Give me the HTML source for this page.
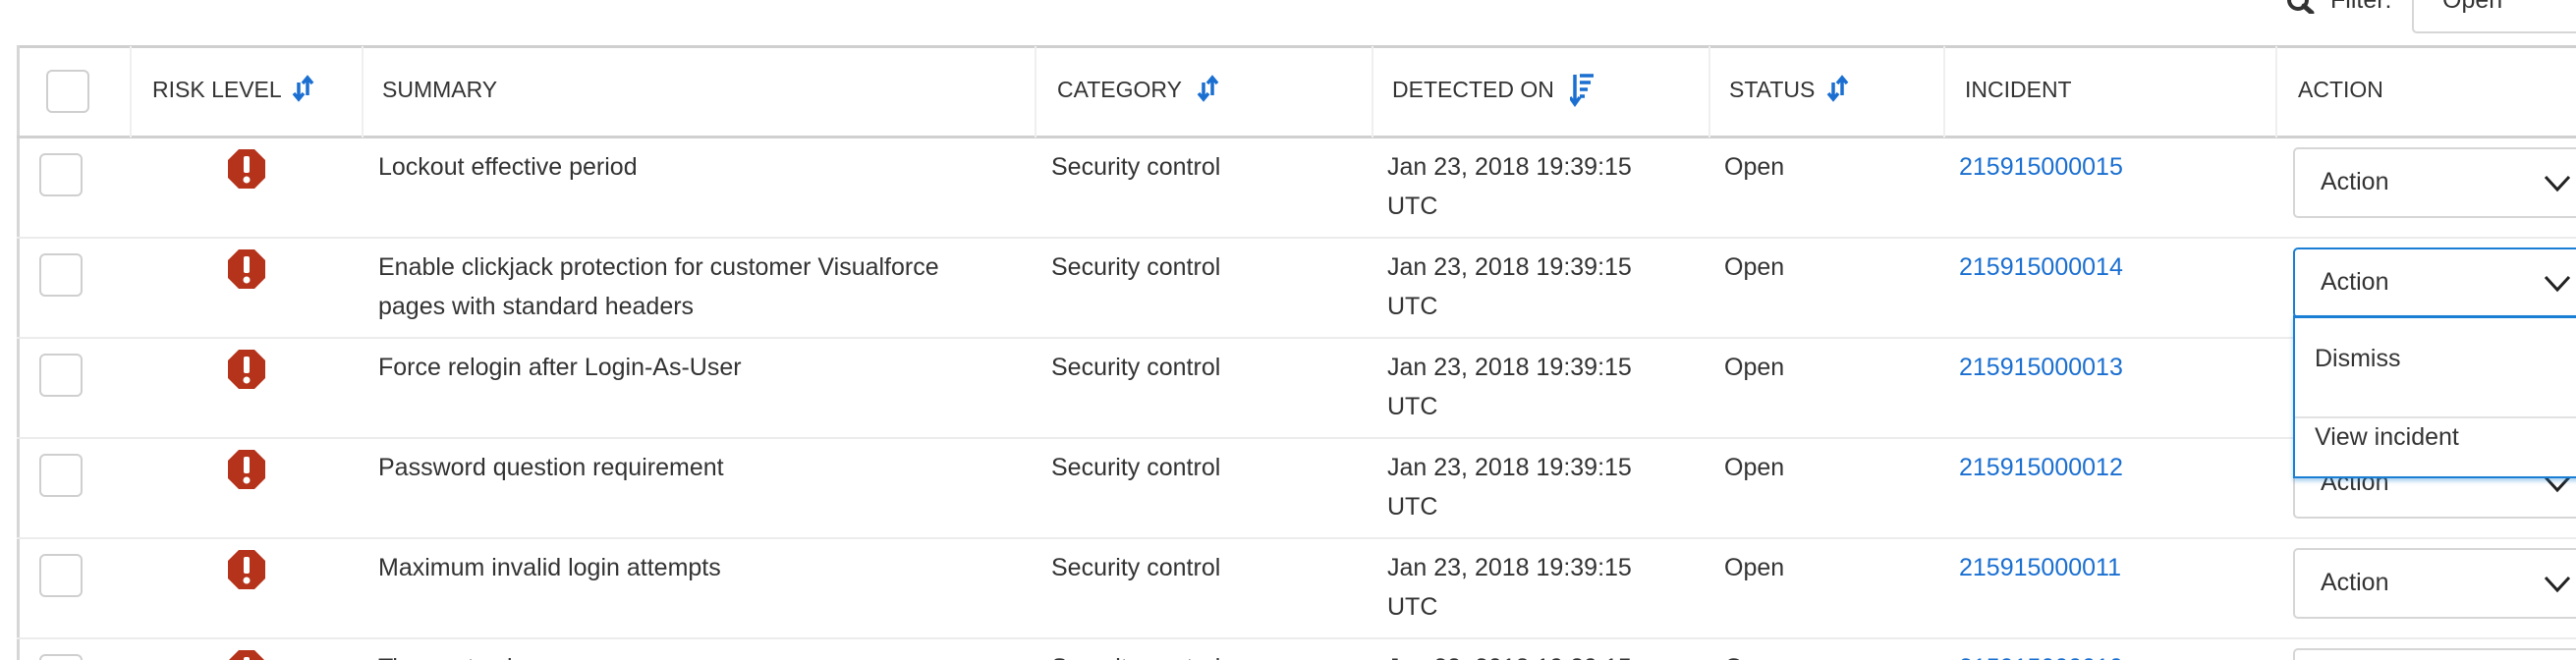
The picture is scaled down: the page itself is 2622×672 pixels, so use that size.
<!DOCTYPE html>
<html style="width:2622px;height:672px;overflow:hidden"><head><meta charset="utf-8"><style>
*{margin:0;padding:0;box-sizing:border-box}
body{width:2622px;height:672px;overflow:hidden;background:#fff;font-family:"Liberation Sans",Arial,sans-serif;color:#333;position:relative}
.a{position:absolute;white-space:nowrap}
.h{font-size:23px;top:78px;color:#333}
.t{font-size:25px;line-height:40px}
.link{color:#1a6fd1}
.cb{position:absolute;width:44px;height:44px;border:2px solid #cfcfcf;border-radius:6px;background:#fff}
.vl{position:absolute;top:47px;width:2px;background:#efefef;height:93px}
.hl{position:absolute;left:17px;width:2605px;height:2px;background:#ececec}
.sel{position:absolute;left:2334px;width:300px;height:72px;border:2px solid #d6d6d6;border-radius:5px;background:#fff}
.sel span{position:absolute;left:26px;top:19px;font-size:25px}
.chev{position:absolute;left:2588px;width:30px;height:30px}
</style></head><body>
<svg class="a" style="left:2327px;top:0" width="32" height="14" viewBox="0 0 32 14"><circle cx="12" cy="0" r="9" fill="none" stroke="#333" stroke-width="4"/><line x1="18" y1="6" x2="26" y2="13" stroke="#333" stroke-width="5" stroke-linecap="round"/></svg>
<div class="a" style="left:2372px;top:-14px;font-size:25px">Filter:</div>
<div class="a" style="left:2455px;top:-6px;width:180px;height:40px;border:2px solid #d6d6d6;border-radius:5px"></div>
<div class="a" style="left:2486px;top:-14px;font-size:25px">Open</div>
<div class="a" style="left:17px;top:46px;width:2605px;height:3px;background:#cfcfcf"></div>
<div class="a" style="left:17px;top:46px;width:3px;height:626px;background:#d6d6d6"></div>
<div class="a" style="left:17px;top:138px;width:2605px;height:3px;background:#d0d0d0"></div>
<div class="vl" style="left:132px"></div><div class="vl" style="left:368px"></div><div class="vl" style="left:1053px"></div><div class="vl" style="left:1396px"></div><div class="vl" style="left:1739px"></div><div class="vl" style="left:1978px"></div><div class="vl" style="left:2316px"></div>
<div class="hl" style="top:241px"></div><div class="hl" style="top:343px"></div><div class="hl" style="top:445px"></div><div class="hl" style="top:547px"></div><div class="hl" style="top:649px"></div>
<div class="cb" style="left:47px;top:71px"></div>
<div class="a h" style="left:155px">RISK LEVEL</div>
<div class="a h" style="left:389px">SUMMARY</div>
<div class="a h" style="left:1076px">CATEGORY</div>
<div class="a h" style="left:1417px">DETECTED ON</div>
<div class="a h" style="left:1760px">STATUS</div>
<div class="a h" style="left:2000px">INCIDENT</div>
<div class="a h" style="left:2339px">ACTION</div>
<svg class="a" style="left:296px;top:76px" width="26" height="28" viewBox="0 0 26 28"><path d="M8 8v16M3 19l5 6 5-6M17 21V4M12 9l5-6 5 6" stroke="#1a6fd1" stroke-width="3.5" fill="none"/></svg>
<svg class="a" style="left:1217px;top:76px" width="26" height="28" viewBox="0 0 26 28"><path d="M8 8v16M3 19l5 6 5-6M17 21V4M12 9l5-6 5 6" stroke="#1a6fd1" stroke-width="3.5" fill="none"/></svg>
<svg class="a" style="left:1858px;top:76px" width="26" height="28" viewBox="0 0 26 28"><path d="M8 8v16M3 19l5 6 5-6M17 21V4M12 9l5-6 5 6" stroke="#1a6fd1" stroke-width="3.5" fill="none"/></svg>
<svg class="a" style="left:1598px;top:74px" width="26" height="36" viewBox="0 0 26 36"><path d="M5 2v28M0 25l5 7 5-7M10 3h14M10 10h11M10 17h8M10 24h5" stroke="#1a6fd1" stroke-width="3.5" fill="none"/></svg>
<div id="rows"></div>
<script>
var data=[["Lockout effective period","215915000015"],["Enable clickjack protection for customer Visualforce<br>pages with standard headers","215915000014"],["Force relogin after Login-As-User","215915000013"],["Password question requirement","215915000012"],["Maximum invalid login attempts","215915000011"],["Time-out value","215915000010"]];
var h="";
data.forEach(function(d,i){var y=141+i*102;
h+='<div class="cb" style="left:40px;top:'+(y+15)+'px"></div>';
h+='<svg class="a" style="left:231px;top:'+(y+10)+'px" width="40" height="42" viewBox="0 0 40 42"><polygon points="12,1 28,1 39,12 39,30 28,41 12,41 1,30 1,12" fill="#b5321b"/><rect x="17" y="8" width="6" height="17" rx="2" fill="#fff"/><circle cx="20" cy="32" r="3.5" fill="#fff"/></svg>';
h+='<div class="a t" style="left:385px;top:'+(y+9)+'px">'+d[0]+'</div>';
h+='<div class="a t" style="left:1070px;top:'+(y+9)+'px">Security control</div>';
h+='<div class="a t" style="left:1412px;top:'+(y+9)+'px">Jan 23, 2018 19:39:15<br>UTC</div>';
h+='<div class="a t" style="left:1755px;top:'+(y+9)+'px">Open</div>';
h+='<div class="a t link" style="left:1994px;top:'+(y+9)+'px">'+d[1]+'</div>';
var sb=i==1?'border-color:#1a7fd4':'';
h+='<div class="sel" style="top:'+(y+9)+'px;'+sb+'"><span>Action</span></div>';
h+='<svg class="chev" style="top:'+(y+31)+'px" viewBox="0 0 30 30"><path d="M3 8l12 13 12-13" stroke="#222" stroke-width="3" fill="none"/></svg>';
});
document.getElementById("rows").innerHTML=h;
</script>
<div class="a" style="left:2334px;top:321px;width:300px;height:166px;background:#fff;border:2px solid #1a7fd4;border-top-width:3px;box-shadow:0 3px 4px rgba(26,127,212,.35)"></div>
<div class="a" style="left:2336px;top:424px;width:290px;height:2px;background:#e2e2e2"></div>
<div class="a t" style="left:2356px;top:345px">Dismiss</div>
<div class="a t" style="left:2356px;top:425px">View incident</div>
</body></html>
